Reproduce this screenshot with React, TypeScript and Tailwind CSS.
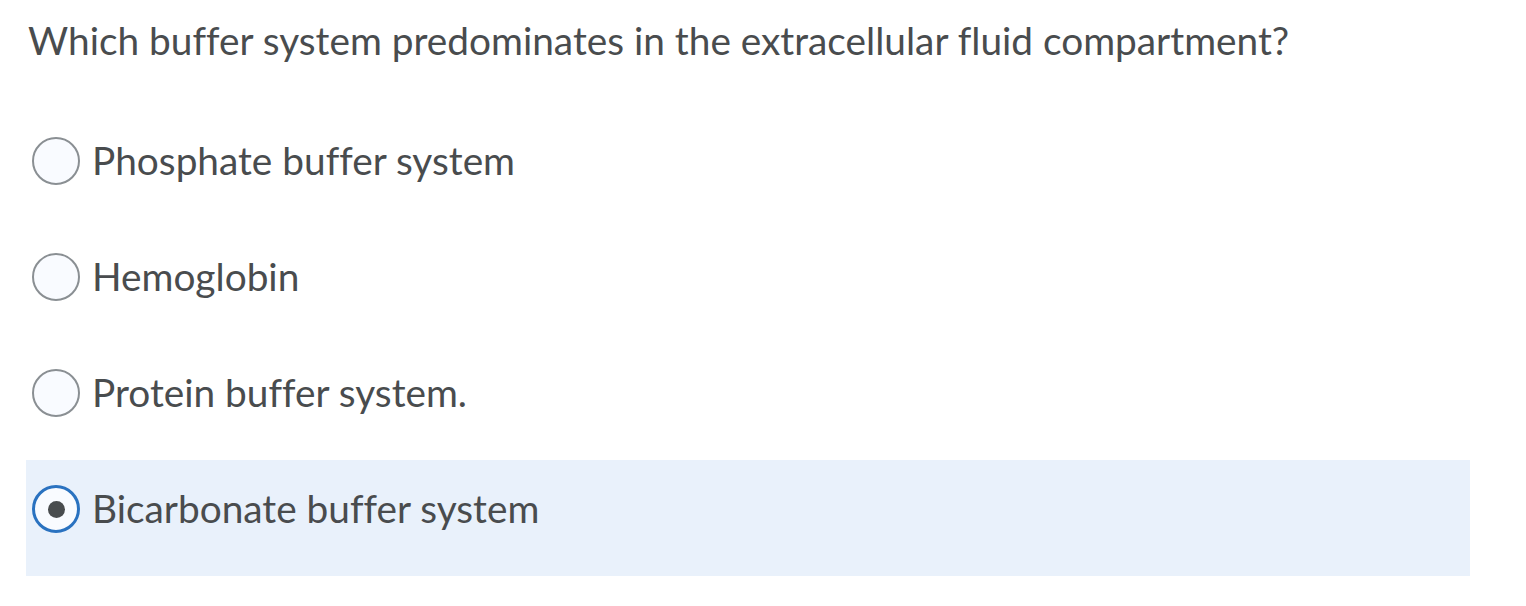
import React, { useState } from 'react';

const OPTIONS = [
  "Phosphate buffer system",
  "Hemoglobin",
  "Protein buffer system.",
  "Bicarbonate buffer system",
];

const Radio = ({ checked }: { checked: boolean }) => (
  <span
    className={`shrink-0 w-[48px] h-[48px] rounded-full bg-[#f9fbff] flex items-center justify-center ${
      checked ? 'border-[3px] border-[#2a72c0]' : 'border-2 border-[#8a8f93]'
    }`}
  >
    {checked && <span className="w-[17px] h-[17px] rounded-full bg-[#494c4e]" />}
  </span>
);

export default function App() {
  const [selected, setSelected] = useState(3);

  return (
    <div className="w-[1526px] h-[606px] bg-white text-[#494c4e] font-['Lato',sans-serif] [font-variant-ligatures:none]">
      <div className="pl-[28px] pt-[17px] h-[112px] text-[38.8px] leading-[46px]">
        Which buffer system predominates in the extracellular fluid compartment?
      </div>
      <div className="flex flex-col pl-[26px]">
        {OPTIONS.map((opt, i) => (
          <label
            key={opt}
            onClick={() => setSelected(i)}
            className={`w-[1444px] h-[116px] flex items-start pl-[6px] pt-[25px] gap-[12px] cursor-pointer ${
              selected === i ? 'bg-[#e9f1fb]' : ''
            }`}
          >
            <Radio checked={selected === i} />
            <span className="text-[38.8px] leading-[46px]">{opt}</span>
          </label>
        ))}
      </div>
    </div>
  );
}
